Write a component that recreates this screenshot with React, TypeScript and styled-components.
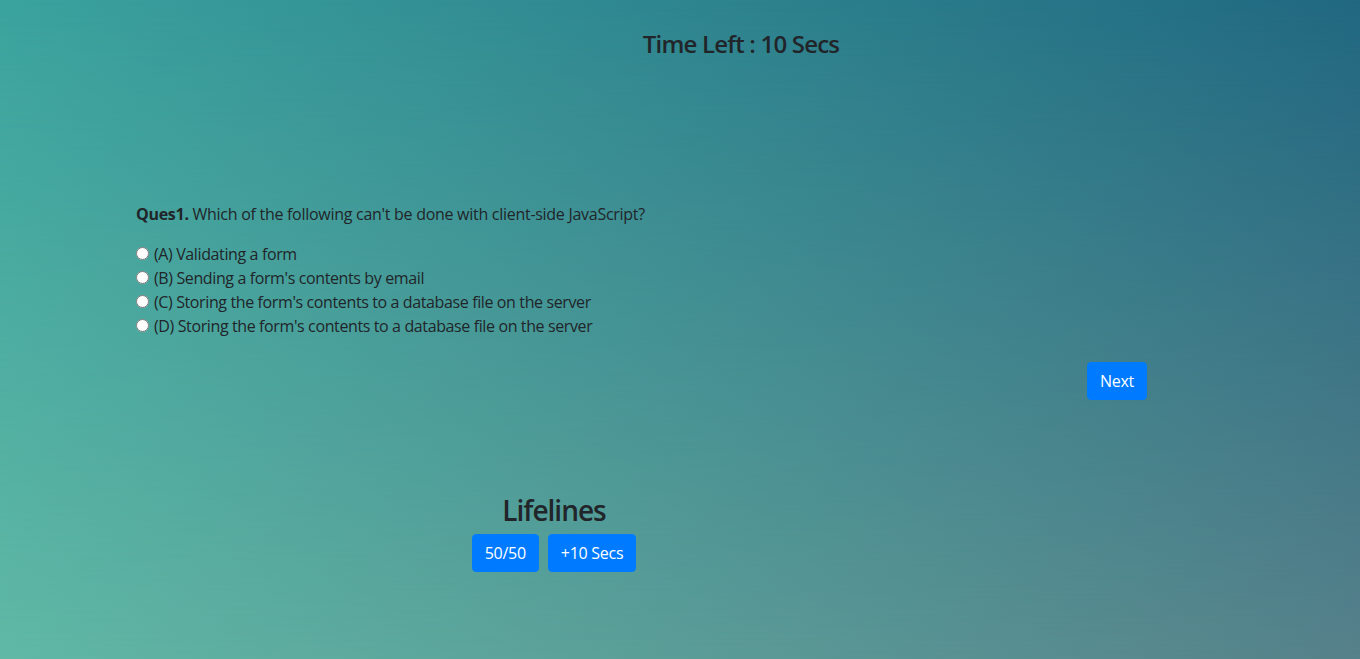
import React from "react";
import styled, { createGlobalStyle } from "styled-components";

const GlobalStyle = createGlobalStyle`
  html, body { margin: 0; padding: 0; }
  body {
    font-family: "Open Sans", "Noto Sans", sans-serif;
    font-size: 16px;
    line-height: 1.5;
    letter-spacing: -0.28px;
    color: #212529;
  }
  * { box-sizing: border-box; }
`;

const Page = styled.div`
  position: relative;
  min-height: 659px;
  overflow: hidden;
  background: linear-gradient(to right, #3ba39e, #216881);
  isolation: isolate;
  &::before {
    content: "";
    position: absolute;
    inset: 0;
    z-index: -1;
    background: linear-gradient(to right, #60b8a5, #56818a);
    -webkit-mask-image: linear-gradient(to bottom, transparent, black);
    mask-image: linear-gradient(to bottom, transparent, black);
  }
`;

const Header = styled.h4`
  margin: 0;
  padding: 30px 0 0 122px;
  text-align: center;
  font-size: 24px;
  font-weight: 600;
  letter-spacing: -0.8px;
  line-height: 1.2;
`;

const QuestionBlock = styled.section`
  padding: 143px 0 0 136px;
`;

const QuestionText = styled.p`
  margin: 0 0 16px;
`;

const Options = styled.div`
  display: flex;
  flex-direction: column;
  letter-spacing: -0.38px;
`;

const Option = styled.label`
  display: flex;
  align-items: center;
  gap: 5px;
  height: 24px;
`;

const Radio = styled.input`
  margin: 0;
  width: 13px;
  height: 13px;
`;

const NextRow = styled.div`
  display: flex;
  justify-content: flex-end;
  padding: 24px 213px 0 0;
`;

const Button = styled.button`
  font-family: inherit;
  font-size: 16px;
  letter-spacing: -0.28px;
  line-height: 1.5;
  padding: 6px 12px;
  color: #fff;
  background: #007bff;
  border: 1px solid #007bff;
  border-radius: 4px;
  cursor: pointer;
`;

const Lifelines = styled.section`
  display: flex;
  flex-direction: column;
  align-items: center;
  margin: 94px 0 0 136px;
  width: 836px;
`;

const LifelineTitle = styled.h3`
  margin: 0 0 7px;
  font-size: 28px;
  font-weight: 600;
  letter-spacing: -1px;
  line-height: 1.2;
`;

const ButtonGroup = styled.div`
  display: flex;
  gap: 9px;
`;

const options = [
  "(A) Validating a form",
  "(B) Sending a form's contents by email",
  "(C) Storing the form's contents to a database file on the server",
  "(D) Storing the form's contents to a database file on the server",
];

export default function App() {
  return (
    <>
      <GlobalStyle />
      <Page>
        <Header>Time Left : 10 Secs</Header>
        <QuestionBlock>
          <QuestionText>
            <b>Ques1.</b> Which of the following can't be done with client-side JavaScript?
          </QuestionText>
          <Options>
            {options.map((o, i) => (
              <Option key={i}>
                <Radio type="radio" name="q1" />
                {o}
              </Option>
            ))}
          </Options>
        </QuestionBlock>
        <NextRow>
          <Button>Next</Button>
        </NextRow>
        <Lifelines>
          <LifelineTitle>Lifelines</LifelineTitle>
          <ButtonGroup>
            <Button>50/50</Button>
            <Button>+10 Secs</Button>
          </ButtonGroup>
        </Lifelines>
      </Page>
    </>
  );
}
